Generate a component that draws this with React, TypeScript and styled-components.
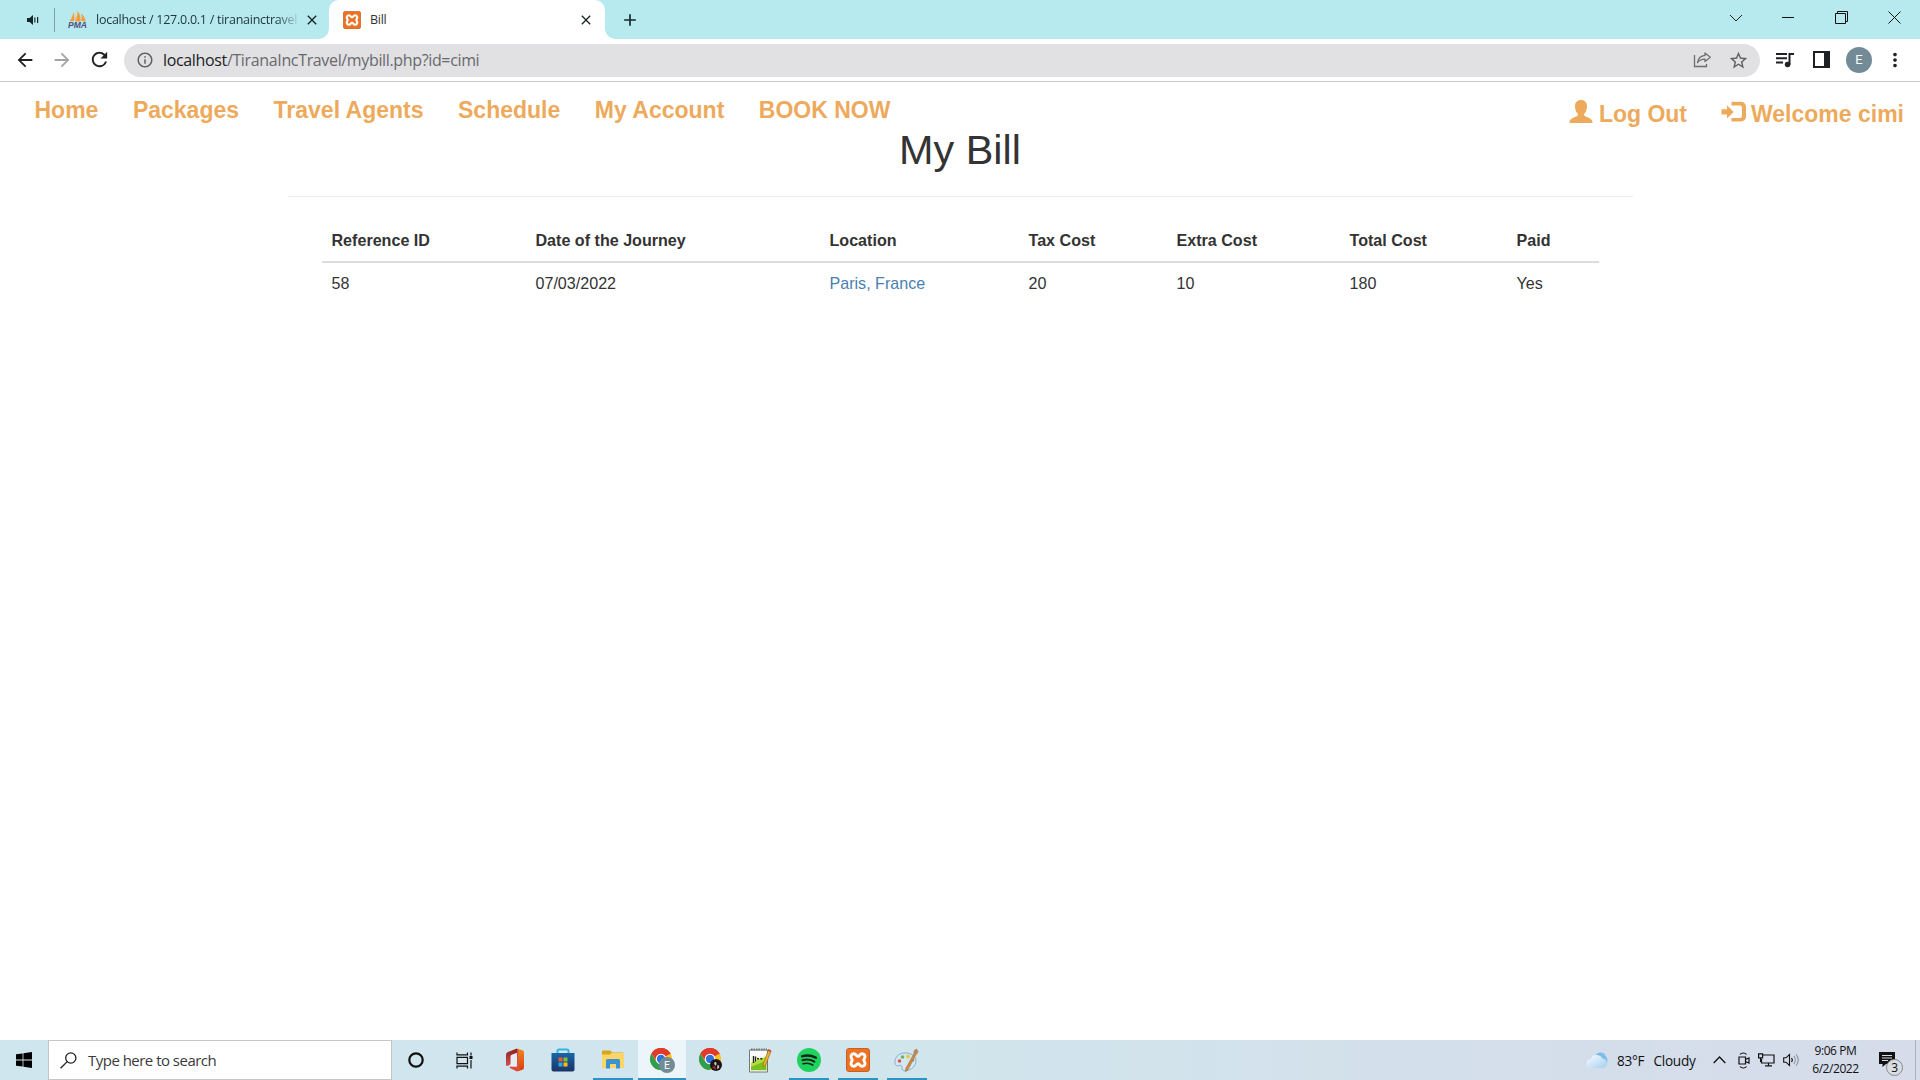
import React from "react";
import styled, { createGlobalStyle } from "styled-components";
import {
  MdArrowBack, MdArrowForward, MdRefresh, MdInfoOutline, MdStarBorder,
  MdMoreVert, MdClose, MdAdd,
} from "react-icons/md";

const ui = `"Open Sans", "Noto Sans", sans-serif`;
const page = `"Liberation Sans", Arial, sans-serif`;

const Global = createGlobalStyle`
  * { box-sizing: border-box; }
  body { margin: 0; background: #fff; overflow: hidden; }
`;

const Screen = styled.div`
  width: 1920px;
  height: 1080px;
  display: flex;
  flex-direction: column;
  background: #fff;
  svg { display: block; flex: none; }
`;

/* ---------- tab strip ---------- */
const TabStrip = styled.div`
  height: 39px;
  background: #b7eaef;
  display: flex;
  font-family: ${ui};
  font-size: 12.5px;
  color: #22383c;
`;
const InactiveTab = styled.div`
  width: 329px;
  display: flex;
  align-items: center;
  padding-left: 26px;
  svg { color: #15262a; }
`;
const TabDivider = styled.div`
  width: 1px;
  height: 24px;
  margin: 1px 13px 0 15px;
  background: #7d9fa4;
`;
const TabTitle = styled.span<{ $w: number; $fade?: boolean; $ls?: number }>`
  width: ${(p) => p.$w}px;
  margin-left: 9px;
  white-space: nowrap;
  line-height: 18px;
  letter-spacing: ${(p) => p.$ls ?? 0}px;
  ${(p) => p.$fade && "mask-image: linear-gradient(90deg, #000 90%, rgba(0,0,0,.15));"}
`;
const TabClose = styled(MdClose)`
  margin-left: 7px;
`;
const ActiveTab = styled.div`
  position: relative;
  width: 276px;
  background: #fff;
  border-radius: 10px 10px 0 0;
  display: flex;
  align-items: center;
  padding-left: 14px;
  color: #333;
  svg { color: #1b2527; }
  &::before, &::after {
    content: "";
    position: absolute;
    bottom: 0;
    width: 10px;
    height: 10px;
  }
  &::before { left: -10px; background: radial-gradient(circle at 0 0, transparent 9.5px, #fff 10px); }
  &::after { right: -10px; background: radial-gradient(circle at 100% 0, transparent 9.5px, #fff 10px); }
`;
const NewTab = styled.div`
  display: flex;
  align-items: center;
  padding-left: 15px;
  color: #15262a;
`;
const WindowButtons = styled.div`
  margin-left: auto;
  display: grid;
  grid-template-columns: 46px 58px 48px 58px;
  justify-items: center;
  height: 35px;
  align-items: center;
  width: 207px;
`;

/* ---------- toolbar ---------- */
const Toolbar = styled.div`
  height: 43px;
  display: flex;
  align-items: center;
  border-bottom: 1px solid #c9c9cb;
  padding: 0 0 1px 14px;
  color: #202124;
`;
const NavButton = styled.div<{ $muted?: boolean }>`
  width: 37px;
  color: ${(p) => (p.$muted ? "#a3a3a5" : "#202124")};
`;
const AddressBar = styled.div`
  width: 1636px;
  height: 33px;
  border-radius: 17px;
  background: #e1e1e3;
  margin: 1px 15px 0 -1px;
  display: flex;
  align-items: center;
  padding: 0 11px 0 12px;
  color: #5f6063;
`;
const Url = styled.div`
  flex: 1;
  margin-left: 9px;
  font: 16px/22px ${ui};
  letter-spacing: -0.35px;
  color: #68696c;
  b { font-weight: 400; color: #202124; }
`;
const OmniActions = styled.div`
  display: flex;
  align-items: center;
  gap: 16px;
`;
const ToolActions = styled.div`
  display: flex;
  align-items: center;
`;
const Avatar = styled.div`
  width: 26px;
  height: 26px;
  border-radius: 50%;
  background: #738b96;
  color: #fff;
  font: 13px/26px Roboto, sans-serif;
  text-align: center;
  margin: 0 12px 0 16px;
`;
const PanelButton = styled.div`
  margin-left: 18px;
`;

/* ---------- web page ---------- */
const Content = styled.main`
  flex: 1;
  font-family: ${page};
  color: #333;
`;
const SiteNav = styled.nav`
  height: 42px;
  display: flex;
  justify-content: space-between;
  padding: 14px 16px 0 34.5px;
  font-weight: 700;
  font-size: 23px;
  line-height: 28px;
  color: #edaa5c;
`;
const NavGroup = styled.div<{ $gap: number; $drop?: number }>`
  display: flex;
  gap: ${(p) => p.$gap}px;
  padding-top: ${(p) => p.$drop ?? 0}px;
`;
const NavLink = styled.a<{ $space?: number }>`
  display: flex;
  gap: ${(p) => p.$space ?? 0}px;
  white-space: nowrap;
`;
const Container = styled.section`
  width: 1345px;
  margin: 0 auto;
`;
const Title = styled.h1`
  margin: 0;
  padding-top: 3px;
  height: 73px;
  font-size: 41.4px;
  font-weight: 400;
  line-height: 46px;
  text-align: center;
  border-bottom: 1px solid #ececec;
`;
const Table = styled.table`
  width: 1277px;
  margin: 22px auto 0;
  table-layout: fixed;
  border-collapse: collapse;
  font-size: 16.1px;
  line-height: 23px;
  text-align: left;
`;
const Th = styled.th<{ $w: number }>`
  width: ${(p) => p.$w}px;
  padding: 9px 0 9px 10px;
  height: 43px;
  border-bottom: 2px solid #dcdcdc;
  white-space: nowrap;
`;
const Td = styled.td<{ $link?: boolean }>`
  padding: 9px 0 9px 10px;
  color: ${(p) => (p.$link ? "#4a7fb0" : "#333")};
`;

/* ---------- taskbar ---------- */
const Taskbar = styled.footer`
  height: 40px;
  display: flex;
  background: linear-gradient(90deg, #d0e6ee 0, #d1e5ed 50%, #d3dfea 75%, #d6dcea 100%);
  font-family: ${ui};
  color: #111;
`;
const StartButton = styled.div`
  width: 48px;
  display: grid;
  place-items: center;
`;
const SearchBox = styled.div`
  width: 344px;
  border: 1px solid #c3c5c6;
  background: #fff;
  display: flex;
  align-items: center;
  gap: 11px;
  padding-left: 11px;
  font-size: 15px;
  color: #3a3a3a;
  letter-spacing: -0.52px;
`;
const AppButton = styled.div<{ $open?: boolean; $active?: boolean; $shift?: number }>`
  width: 49px;
  display: flex;
  align-items: center;
  justify-content: center;
  position: relative;
  padding-right: ${(p) => p.$shift ?? 0}px;
  ${(p) => p.$active && "background: linear-gradient(#ecf5f9, #ecf5f9) center / 48px 100% no-repeat;"}
  &::after {
    content: "";
    position: absolute;
    bottom: 0;
    height: 2px;
    width: ${(p) => (p.$active ? 48 : 40)}px;
    background: ${(p) => (p.$open || p.$active ? "#2d93c5" : "transparent")};
  }
`;
const Tray = styled.div`
  margin-left: auto;
  width: 334px;
  display: flex;
  align-items: center;
`;
const Weather = styled.div`
  display: flex;
  align-items: center;
  width: 128px;
  font-size: 13.6px;
  letter-spacing: -0.25px;
  white-space: nowrap;
  span { margin-left: 9px; }
`;
const Clock = styled.div`
  width: 60px;
  margin-left: 5px;
  font-size: 12px;
  line-height: 18px;
  letter-spacing: -0.45px;
  text-align: center;
  white-space: nowrap;
`;
const Notices = styled.div`
  position: relative;
  margin-left: 14px;
  width: 36px;
  height: 40px;
  padding-top: 12px;
`;
const Badge = styled.span`
  position: absolute;
  left: 7px;
  top: 19px;
  width: 17px;
  height: 17px;
  border-radius: 50%;
  border: 1px solid #888;
  background: #d9dde4;
  font-size: 12px;
  line-height: 15px;
  text-align: center;
`;
const ShowDesktop = styled.div`
  width: 5px;
  height: 40px;
  border-left: 1px solid #a9b1bd;
`;
const TrayIcons = styled.div`
  width: 88px;
  display: flex;
  align-items: center;
  gap: 8px;
`;

/* ---------- icons ---------- */
const Speaker = () => (
  <svg width="13" height="12" viewBox="0 0 13 12" fill="currentColor">
    <path d="M1 4h2.600L7 1v10L3.600 8H1z" /><path d="M8.300 3.600h1.100v4.800H8.300zM11 3h1.200v6H11z" />
  </svg>
);
const Pma = () => (
  <svg width="19" height="19" viewBox="0 0 19 19">
    <path d="M1.500 11C4 8 5 5 5.500 2c1 3 1 6 .5 9zM7 11.500C9 8 9.500 4 9.500 0.500 12 4 13 8 12.500 11.500zM13.300 11c.5-2.500.5-5 0-7.500 2.500 2 4 5 4.500 8z" fill="#f39c3c" />
    <path d="M6 9.500C7.500 7 8 5 8.200 2.500L8 11z" fill="#f6c189" />
    <text x="0" y="18.300" fontFamily="Liberation Sans" fontSize="8.200" fontWeight="700" fontStyle="italic" textLength="19" lengthAdjust="spacingAndGlyphs" fill="#4c4f7c">PMA</text>
  </svg>
);
const Xampp = ({ size }: { size: number }) => (
  <svg width={size} height={size} viewBox="0 0 24 24">
    <rect x=".5" y=".5" width="23" height="23" rx="2.500" fill="#ec7324" stroke="#c9601f" />
    <path d="M8 5.700C5.400 5.700 4.600 8 5.200 9.500c.3 1 1 1.700 1 2.500s-.7 1.500-1 2.500c-.6 1.500.2 3.800 2.800 3.800 2.400 0 2-2.600 4-2.600s1.600 2.600 4 2.600c2.600 0 3.400-2.300 2.800-3.800-.3-1-1-1.700-1-2.500s.7-1.500 1-2.500c.6-1.500-.2-3.800-2.800-3.800-2.400 0-2 2.600-4 2.600s-1.600-2.600-4-2.600z" fill="none" stroke="#fff" strokeWidth="2.900" />
  </svg>
);
const Share = () => (
  <svg width="19" height="18" viewBox="0 0 19 18" fill="none" stroke="#6d6e71" strokeWidth="1.300">
    <path d="M1.500 4v11.500h12V13" /><path d="M12 2l5.300 4.300L12 10.600V8.200c-3.500 0-5.800 1-7.500 3.500.5-3.800 3-6.800 7.500-7.300z" strokeLinejoin="round" />
  </svg>
);
const SidePanel = () => (
  <svg width="17" height="17" viewBox="0 0 17 17">
    <rect x="1" y="1" width="15" height="15" fill="#fff" stroke="#202124" strokeWidth="2" /><path d="M11 1h5v15h-5z" fill="#202124" />
  </svg>
);
const UserGlyph = () => (
  <svg width="24" height="25" viewBox="0 0 24 25" fill="currentColor">
    <path d="M12 0c3.600 0 6 2.300 6 6.200 0 3.300-1.200 6-2.800 7.500-.5 1.200.1 2.200 1.600 2.900 3.200 1.400 6.700 2.300 6.700 6.400H.5c0-4.100 3.500-5 6.700-6.400 1.500-.7 2.100-1.700 1.600-2.900C7.200 12.200 6 9.500 6 6.200 6 2.300 8.400 0 12 0z" />
  </svg>
);
const LoginGlyph = () => (
  <svg width="26" height="24" viewBox="0 0 26 24" fill="currentColor">
    <path d="M.5 9.300h5.500V5.300l6.700 6.700L6 18.500v-4H.5z" />
    <path d="M10.500 1.800H20a5 5 0 0 1 5 5v9.700a5 5 0 0 1-5 5h-9.500V18H19a2 2 0 0 0 2-2V7.500a2 2 0 0 0-2-2h-8.500z" />
  </svg>
);
const WinLogo = () => (
  <svg width="16" height="16" viewBox="0 0 16 16" fill="#000">
    <path d="M0 2.300L6.600 1.400v6.200H0zM7.400 1.300L16 0v7.600H7.400zM0 8.400h6.600v6.200L0 13.700zM7.400 8.400H16V16l-8.600-1.300z" />
  </svg>
);
const Search = () => (
  <svg width="17" height="17" viewBox="0 0 17 17" fill="none" stroke="#222" strokeWidth="1.300">
    <circle cx="10.800" cy="6" r="5.100" /><path d="M7.200 9.600L.6 16.300" />
  </svg>
);
const Cortana = () => (
  <svg width="18" height="18" viewBox="0 0 18 18"><circle cx="9" cy="9" r="6.700" fill="none" stroke="#111" strokeWidth="2.200" /></svg>
);
const TaskView = () => (
  <svg width="17" height="17" viewBox="0 0 17 17" fill="none" stroke="#111" strokeWidth="1.200">
    <path d="M1 .5v2.300h10.500V.5M1 16.500v-2.300h10.500v2.300M1 5.300h10.500v6.400H1zM15 .5v3M15 8v8.500" /><path d="M13.500 4h3v3h-3z" fill="#111" stroke="none" />
  </svg>
);
const Office = () => (
  <svg width="20" height="24" viewBox="0 0 20 24">
    <defs>
      <linearGradient id="officeSide" x1="0" y1="0" x2="0" y2="1"><stop offset="0" stopColor="#f08a1c" /><stop offset="1" stopColor="#d93a10" /></linearGradient>
      <linearGradient id="officeLeft" x1="0" y1="0" x2="0" y2="1"><stop offset="0" stopColor="#8c1f1c" /><stop offset="1" stopColor="#d5504f" /></linearGradient>
    </defs>
    <path d="M12 .5L3 4a3 3 0 0 0-2 2.800v9.700c0 2 1.500 1.700 2.500 1.100l1.300-.8c.5-.4.700-.8.700-1.500V8.500c0-.8.300-1.200 1-1.500l5.500-2z" fill="url(#officeLeft)" />
    <path d="M12 .5l5.500 1.700A2 2 0 0 1 19 4.200v15.600a2 2 0 0 1-1.500 2L12 23.500c1-.6 1.200-1.500 1.200-2.500V3c0-1-.2-2-1.200-2.500z" fill="url(#officeSide)" />
    <path d="M12 .5c1 .5 1.500 1.500 1.500 2.500v18c0 1-.5 2-1.500 2.500l-6.500-3.300c-1.200-.6-1-1.700.2-1.700H12z" fill="#dd4a35" />
    <path d="M6 7.300l6-2.200v13.300H6z" fill="#e6eef2" />
  </svg>
);
const Store = () => (
  <svg width="24" height="24" viewBox="0 0 24 24">
    <defs><linearGradient id="bag" x1="0" y1="0" x2="0" y2="1"><stop offset="0" stopColor="#1766a8" /><stop offset="1" stopColor="#1c3566" /></linearGradient></defs>
    <path d="M6.500 6V3A1.500 1.500 0 0 1 8 1.500h8A1.500 1.500 0 0 1 17.500 3v3" fill="none" stroke="#36b4e4" strokeWidth="2" />
    <path d="M.5 5h23v16.500a2 2 0 0 1-2 2h-19a2 2 0 0 1-2-2z" fill="url(#bag)" />
    <path d="M7.500 9.500h4v4h-4z" fill="#f05a2b" /><path d="M12.500 9.500h4v4h-4z" fill="#84bd31" /><path d="M7.500 14.500h4v4h-4z" fill="#2aa8e8" /><path d="M12.500 14.500h4v4h-4z" fill="#fdbc16" />
  </svg>
);
const Folder = () => (
  <svg width="24" height="20" viewBox="0 0 24 20">
    <path d="M1 3V1.500A1 1 0 0 1 2 .5h7.500l1.500 2h11V9H1z" fill="#d9a520" /><path d="M1 4.500h8l1.500-1.500H23v15H1z" fill="#fbd667" />
    <path d="M5 18.500v-8A1.500 1.500 0 0 1 6.500 9h11a1.500 1.500 0 0 1 1.500 1.500v8h-4V14H9v4.500z" fill="#3d92d2" />
  </svg>
);
const Chrome = ({ kind }: { kind: "letter" | "photo" }) => (
  <svg width="26" height="28" viewBox="1 0 26 28">
    <circle cx="13" cy="13" r="11" fill="#fcc31e" />
    <path d="M13 13L3.470 7.500A11 11 0 0 1 22.530 7.500z" fill="#e13b30" />
    <path d="M13 13l-4.500 3L3.470 7.500A11 11 0 0 0 13 24l4.500-8z" fill="#2f9e4e" />
    <path d="M13 8h9.800l-.3-.6A11 11 0 0 0 3.470 7.500L8.500 15z" fill="#e13b30" />
    <circle cx="13" cy="13" r="5.300" fill="#fff" /><circle cx="13" cy="13" r="4.200" fill="#2f74dc" />
    {kind === "letter" ? (
      <>
        <circle cx="19" cy="19" r="8" fill="#738b96" />
        <text x="19" y="23" fontFamily="Roboto" fontSize="10.500" textAnchor="middle" fill="#fff">E</text>
      </>
    ) : (
      <>
        <circle cx="19" cy="19" r="6" fill="#1d1517" />
        <path d="M17 17c1-1.500 2.500-1 2.500.5s-.5 2-1.500 2zM20.500 19c1.500-.5 2 1 1.500 3l-2 1z" fill="#d8c0bb" /><path d="M15 21l3-1 1 4z" fill="#a33" />
      </>
    )}
  </svg>
);
const Notepad = () => (
  <svg width="24" height="25" viewBox="0 0 24 25">
    <path d="M1.500 2h18v22h-18z" fill="#fbfbfb" stroke="#777" />
    <path d="M3 15L18.500 8.500v13.800H3z" fill="#79c01e" /><path d="M3 8.500h15.500L3 15z" fill="#eef6d6" /><path d="M3 15L18.500 8.500v4L3 19z" fill="#b4dc3a" />
    <path d="M3 1.500h16" stroke="#777" strokeDasharray="1.500 1" strokeWidth="2" />
    <path d="M5.500 8v7M7.500 8.500v5" stroke="#222" strokeWidth="1.300" /><path d="M9 10.800h2M12.300 10.800h2" stroke="#222" strokeWidth="1.400" />
    <path d="M20.500 2l2.500 1.200-5.500 14-2.500 1.500.3-3z" fill="#f0b32d" stroke="#9a6a1e" strokeWidth=".7" /><path d="M20.500 1l2.800 1.400-.7 1.700L20 2.700z" fill="#c4444f" />
  </svg>
);
const Spotify = () => (
  <svg width="24" height="24" viewBox="0 0 24 24">
    <circle cx="12" cy="12" r="12" fill="#1ed45f" />
    <g fill="none" stroke="#10251a" strokeLinecap="round"><path d="M5 8.300c4.500-1.300 9.800-.9 14 1.500" strokeWidth="2.300" /><path d="M5.500 12.200c4-1.100 8.400-.6 11.900 1.400" strokeWidth="2" /><path d="M6 15.800c3.300-.9 6.900-.5 9.800 1.200" strokeWidth="1.600" /></g>
  </svg>
);
const Paint = () => (
  <svg width="25" height="25" viewBox="0 0 25 25">
    <path d="M10 5C4 5.500.5 10 1 15c.3 2.500 2 3.500 4 2.500 1.800-.8 3.300.2 3 2-.3 2 1.200 3.500 3.500 3.300 6-.5 10.500-5 10.500-10C22 7.500 16.500 4.500 10 5z" fill="#d3e7f4" stroke="#7fa8c4" strokeWidth=".9" />
    <circle cx="5.500" cy="13" r="1.800" fill="#dd5548" /><circle cx="8.500" cy="9" r="1.800" fill="#6ab651" /><circle cx="14" cy="8.500" r="1.900" fill="#efc53b" /><circle cx="18.500" cy="12" r="1.600" fill="#4b8fd6" />
    <path d="M20 5.500l2 1.200-8 15-2.500 2 .3-3.500z" fill="#d08a45" stroke="#a0642c" strokeWidth=".5" /><path d="M19.500 5.500C19 3 20.500 1 23 .5c-.2 1.500 1 2 1.500 2.500-.5 2-1.500 3.700-3 4z" fill="#b58a62" />
  </svg>
);
const Cloud = () => (
  <svg width="22" height="17" viewBox="0 0 22 17">
    <defs><linearGradient id="cloud" x1="0" y1="0" x2="1" y2="1"><stop offset="0" stopColor="#fafdff" /><stop offset="1" stopColor="#a2d0f2" /></linearGradient></defs>
    <path d="M9 5a5.500 5.500 0 0 1 10.500-1C22 6 22 11 20 13z" fill="#7dbcea" />
    <path d="M5 16a4.500 4.500 0 0 1-.3-9A6.500 6.500 0 0 1 16.500 6.500 4.800 4.800 0 0 1 17 16z" fill="url(#cloud)" />
  </svg>
);

const columns = [
  { label: "Reference ID", value: "58", width: 204 },
  { label: "Date of the Journey", value: "07/03/2022", width: 294 },
  { label: "Location", value: "Paris, France", width: 199, link: true },
  { label: "Tax Cost", value: "20", width: 148 },
  { label: "Extra Cost", value: "10", width: 173 },
  { label: "Total Cost", value: "180", width: 167 },
  { label: "Paid", value: "Yes", width: 92 },
];
const links = ["Home", "Packages", "Travel Agents", "Schedule", "My Account", "BOOK NOW"];

export default function App() {
  return (
    <Screen>
      <Global />
      <TabStrip>
        <InactiveTab>
          <Speaker />
          <TabDivider />
          <Pma />
          <TabTitle $w={201} $fade $ls={-0.26}>localhost / 127.0.0.1 / tiranainctravel</TabTitle>
          <TabClose size={16} />
        </InactiveTab>
        <ActiveTab>
          <Xampp size={18} />
          <TabTitle $w={201} $ls={-0.3}>Bill</TabTitle>
          <TabClose size={16} />
        </ActiveTab>
        <NewTab><MdAdd size={20} /></NewTab>
        <WindowButtons>
          <svg width="14" height="8" viewBox="0 0 14 8" fill="none" stroke="#222"><path d="M1 1l6 6 6-6" /></svg>
          <svg width="12" height="2" viewBox="0 0 12 2"><path d="M0 0h12v1H0z" fill="#111" /></svg>
          <svg width="13" height="13" viewBox="0 0 13 13" fill="none" stroke="#111"><path d="M.5 2.500h10v10H.5zM2.500 2.500v-2h10v10h-2" /></svg>
          <svg width="13" height="13" viewBox="0 0 13 13" stroke="#111"><path d="M.5.5l12 12M12.500.5l-12 12" /></svg>
        </WindowButtons>
      </TabStrip>

      <Toolbar>
        <NavButton><MdArrowBack size={22} /></NavButton>
        <NavButton $muted><MdArrowForward size={22} /></NavButton>
        <NavButton><MdRefresh size={23} /></NavButton>
        <AddressBar>
          <MdInfoOutline size={18} />
          <Url><b>localhost</b>/TiranaIncTravel/mybill.php?id=cimi</Url>
          <OmniActions><Share /><MdStarBorder size={21} /></OmniActions>
        </AddressBar>
        <ToolActions>
          <svg width="20" height="16" viewBox="0 0 20 16" fill="none" stroke="#202124" strokeWidth="2">
            <path d="M1 2h11M1 6.200h11M1 10.400h7M14.500 12.500V2H19" /><circle cx="12.600" cy="12.500" r="2.800" fill="#202124" stroke="none" />
          </svg>
          <PanelButton><SidePanel /></PanelButton>
          <Avatar>E</Avatar>
          <MdMoreVert size={22} />
        </ToolActions>
      </Toolbar>

      <Content>
        <SiteNav>
          <NavGroup $gap={34.5}>
            {links.map((l) => <NavLink key={l}>{l}</NavLink>)}
          </NavGroup>
          <NavGroup $gap={34} $drop={4}>
            <NavLink $space={6}><UserGlyph />Log Out</NavLink>
            <NavLink $space={4}><LoginGlyph />Welcome cimi</NavLink>
          </NavGroup>
        </SiteNav>
        <Container>
          <Title>My Bill</Title>
          <Table>
            <thead><tr>{columns.map((c) => <Th key={c.label} $w={c.width}>{c.label}</Th>)}</tr></thead>
            <tbody><tr>{columns.map((c) => <Td key={c.label} $link={c.link}>{c.value}</Td>)}</tr></tbody>
          </Table>
        </Container>
      </Content>

      <Taskbar>
        <StartButton><WinLogo /></StartButton>
        <SearchBox><Search />Type here to search</SearchBox>
        <AppButton $shift={2}><Cortana /></AppButton>
        <AppButton $shift={3}><TaskView /></AppButton>
        <AppButton><Office /></AppButton>
        <AppButton $shift={1}><Store /></AppButton>
        <AppButton $open><Folder /></AppButton>
        <AppButton $active><Chrome kind="letter" /></AppButton>
        <AppButton><Chrome kind="photo" /></AppButton>
        <AppButton><Notepad /></AppButton>
        <AppButton $open><Spotify /></AppButton>
        <AppButton $open><Xampp size={24} /></AppButton>
        <AppButton $open><Paint /></AppButton>
        <Tray>
          <Weather><Cloud /><span>83°F</span><span>Cloudy</span></Weather>
          <TrayIcons>
            <svg width="13" height="8" viewBox="0 0 13 8" fill="none" stroke="#111" strokeWidth="1.300"><path d="M.7 7l5.800-6 5.800 6" /></svg>
            <svg width="16" height="17" viewBox="-4 0 16 17" fill="none" stroke="#111" strokeWidth="1.200"><path d="M1 5h6.500v7H1zM7.500 7.500L11 6v5L7.500 9.500M2 2.500c1.500-2 5-2 6.500 0M2 14.500c1.500 2 5 2 6.500 0" /></svg>
            <svg width="17" height="14" viewBox="0 0 17 14" fill="none" stroke="#111" strokeWidth="1.200"><path d="M5 2h11v8H3.500V6M7 12.800h7M10.500 10v3M.6.8h4v4h-4zM2.600 5v4" /></svg>
            <svg width="17" height="14" viewBox="0 0 17 14" fill="none" stroke="#111" strokeWidth="1.100"><path d="M.7 4.800H3L6.500 1.500v11L3 9.200H.7zM8.500 5c1 1.200 1 2.800 0 4" /><path d="M10.800 3.200c2 2.200 2 5.400 0 7.600M13 1.300c3 3.300 3 8.100 0 11.400" stroke="#8d939c" /></svg>
          </TrayIcons>
          <Clock>9:06 PM<br />6/2/2022</Clock>
          <Notices>
            <svg width="17" height="16" viewBox="0 0 17 16"><path d="M0 0h16v12H7l-3.500 3v-3H0z" fill="#111" /><path d="M3 3.500h10M3 6h10M3 8.500h6" stroke="#d6dcea" /></svg>
            <Badge>3</Badge>
          </Notices>
          <ShowDesktop />
        </Tray>
      </Taskbar>
    </Screen>
  );
}
